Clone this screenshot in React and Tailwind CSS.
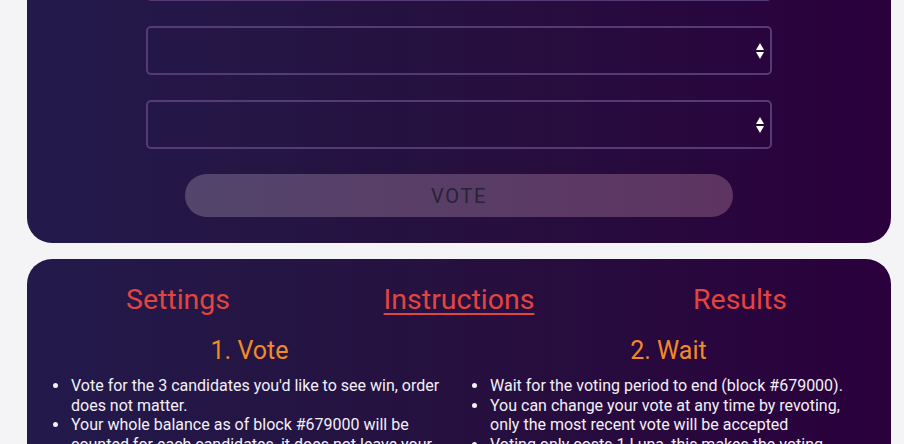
import React from 'react';

const font = { fontFamily: 'Roboto, "Liberation Sans", sans-serif' };

function FakeSelect({ className = '' }) {
  return (
    <div className={`relative h-[49px] w-[626px] rounded-[5px] border-2 border-[#553a76] ${className}`}>
      <div className="absolute right-[6px] top-1/2 flex -translate-y-1/2 flex-col items-center gap-[2px]">
        <span className="h-0 w-0 border-x-[4.5px] border-b-[7px] border-x-transparent border-b-white" />
        <span className="h-0 w-0 border-x-[4.5px] border-t-[7px] border-x-transparent border-t-white" />
      </div>
    </div>
  );
}

const voteItems = [
  "Vote for the 3 candidates you'd like to see win, order does not matter.",
  'Your whole balance as of block #679000 will be counted for each candidates, it does not leave your wallet.',
];

const waitItems = [
  'Wait for the voting period to end (block #679000).',
  'You can change your vote at any time by revoting, only the most recent vote will be accepted',
  'Voting only costs 1 Luna, this makes the voting accessible to everyone.',
];

function Column({ title, items, listClass = '' }) {
  return (
    <div className="w-[413px]">
      <h2 className="text-center text-[25px] leading-[30px] text-[#f28a26]">{title}</h2>
      <ul className={`mt-[10px] list-disc pl-[27px] text-[16px] leading-[19.5px] text-[#f3f0f8] ${listClass}`}>
        {items.map((item, i) => (
          <li key={i} className="pl-[1px]">{item}</li>
        ))}
      </ul>
    </div>
  );
}

export default function App() {
  return (
    <div className="h-[444px] overflow-hidden bg-[#f4f4f6] pl-[27px] pr-[13px]" style={font}>
      <div className="flex flex-col items-center rounded-b-[25px] bg-gradient-to-r from-[#221a4b] via-[#26103f] to-[#2a003c] pb-[26px]">
        <FakeSelect className="-mt-[48px]" />
        <FakeSelect className="mt-[25px]" />
        <FakeSelect className="mt-[25px]" />
        <button className="mt-[25px] h-[43px] w-[548px] rounded-full bg-gradient-to-r from-[#53456c] to-[#5e3461] text-[20px] tracking-[0.08em] text-[#2a2235]">
          VOTE
        </button>
      </div>

      <div className="mt-[16px] rounded-[25px] bg-gradient-to-r from-[#221a4b] via-[#26103f] to-[#2a003c] px-[16px] pb-6 pt-[24px]">
        <div className="flex items-center justify-between text-[28.5px] leading-[34px] text-[#e2443f]">
          <span className="w-[270px] text-center">Settings</span>
          <span className="w-[270px] text-center underline underline-offset-[4px]">Instructions</span>
          <span className="w-[270px] text-center">Results</span>
        </div>
        <div className="mt-[19px] flex justify-between">
          <Column title="1. Vote" items={voteItems} />
          <Column title="2. Wait" items={waitItems} listClass="pr-[24px]" />
        </div>
      </div>
    </div>
  );
}
